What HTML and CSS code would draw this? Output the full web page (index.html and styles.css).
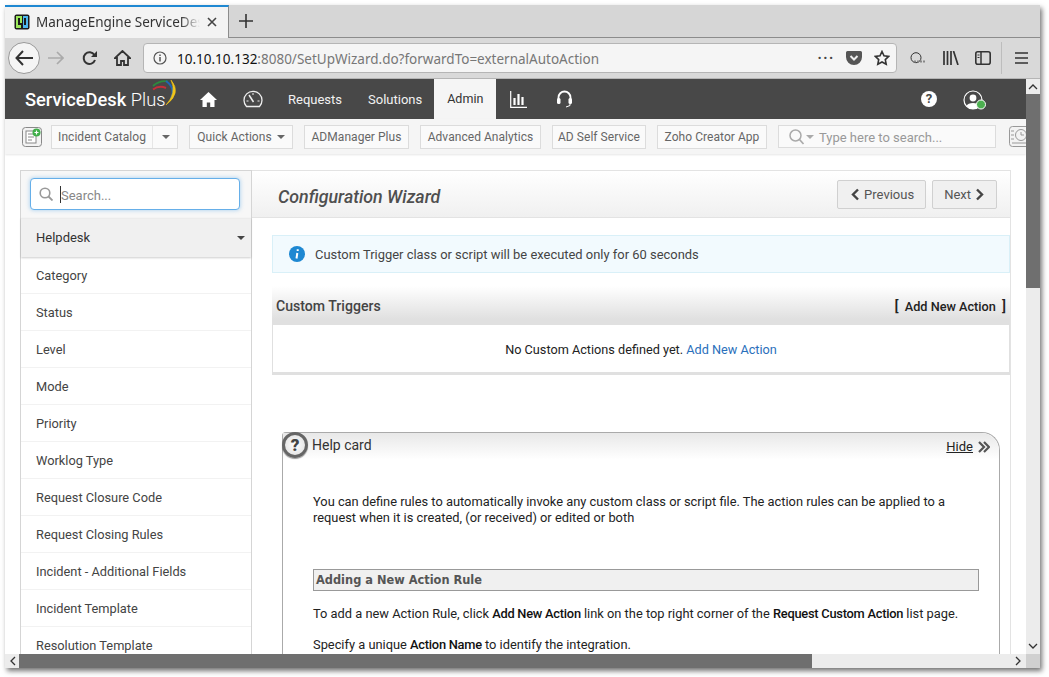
FILE: index.html
```html
<!DOCTYPE html>
<html lang="en">
<head>
    <meta charset="UTF-8">
    <title>ManageEngine ServiceDesk Plus</title>
    <link rel="stylesheet" href="styles.css">
</head>
<body>
<div class="window">
    <div class="tabbar">
        <div class="tab">
            <svg class="favicon" width="16" height="16" viewBox="0 0 16 16"><rect x=".5" y=".5" width="15" height="15" rx="2" fill="#1b1b1b"/><path d="M2 2h6v7H6V4H4v7h3v3H2z" fill="#9be85a"/><path d="M9 2h5v12H9v-3h3V4h-2v7H9z" fill="#4db8ef"/></svg>
            <span class="tab-title">ManageEngine ServiceDesk Plus</span>
            <svg width="12" height="12" viewBox="0 0 12 12"><path d="M2 2l8 8M10 2l-8 8" stroke="#444" stroke-width="1.6"/></svg>
        </div>
        <svg class="new-tab" width="14" height="14" viewBox="0 0 14 14"><path d="M7 0v14M0 7h14" stroke="#333" stroke-width="1.6"/></svg>
    </div>
    <div class="navbar">
        <div class="back">
            <svg width="18" height="16" viewBox="0 0 18 16"><path d="M8 1L1.500 8 8 15M2 8h16" fill="none" stroke="#333" stroke-width="2"/></svg>
        </div>
        <svg class="nav-icon forward" width="16" height="14" viewBox="0 0 16 14"><path d="M9 1l6 6-6 6M15 7H0" fill="none" stroke="#aaa" stroke-width="1.700"/></svg>
        <svg class="nav-icon reload" width="16" height="16" viewBox="0 0 16 16"><path d="M13 10a5.800 5.800 0 1 1-.6-5" fill="none" stroke="#333" stroke-width="2"/><path d="M15 1v6H9z" fill="#333"/></svg>
        <svg class="nav-icon home" width="17" height="16" viewBox="0 0 17 16"><path d="M8.500 1L1 8h2v7h4v-4h3v4h4V8h2z" fill="none" stroke="#333" stroke-width="1.800"/></svg>
        <div class="urlbar">
            <svg width="14" height="14" viewBox="0 0 14 14"><circle cx="7" cy="7" r="6" fill="none" stroke="#555" stroke-width="1.200"/><path d="M7 6v4.500M7 3.500v1.500" stroke="#555" stroke-width="1.500"/></svg>
            <span class="url"><span class="url-host">10.10.10.132</span>:8080/SetUpWizard.do?forwardTo=externalAutoAction</span>
            <span class="url-dots">•••</span>
            <svg width="16" height="14" viewBox="0 0 16 14"><path d="M1.500 0h13A1.500 1.500 0 0 1 16 1.500V6A8 8 0 0 1 0 6V1.500A1.500 1.500 0 0 1 1.500 0z" fill="#555"/><path d="M4.500 5L8 8.500 11.500 5" fill="none" stroke="#eee" stroke-width="2"/></svg>
            <svg width="16" height="16" viewBox="0 0 16 16"><path d="M8 1.500l2 4.300 4.700.6-3.400 3.200.9 4.700L8 12l-4.200 2.300.9-4.700L1.300 6.400 6 5.800z" fill="none" stroke="#333" stroke-width="1.600"/></svg>
        </div>
        <div class="nav-right">
            <svg width="17" height="12" viewBox="0 0 17 12"><circle cx="6" cy="5.700" r="5" fill="none" stroke="#333"/><path d="M4 9.500h12" stroke="#888" stroke-width="2" stroke-dasharray="2 1"/></svg>
            <svg width="16" height="14" viewBox="0 0 16 14"><path d="M1 0v14M4.500 0v14M8 0v14M10.500 0L15 14" stroke="#333" stroke-width="1.700"/></svg>
            <svg width="16" height="14" viewBox="0 0 16 14"><rect x=".8" y=".8" width="14.400" height="12.400" rx="2" fill="none" stroke="#333" stroke-width="1.600"/><path d="M6 1v12" stroke="#333" stroke-width="1.500"/><path d="M2.500 4h2M2.500 6.500h2" stroke="#333"/></svg>
            <span class="nav-sep"></span>
            <svg width="14" height="12" viewBox="0 0 14 12"><path d="M0 1h13M0 6h13M0 11h13" stroke="#333" stroke-width="1.600"/></svg>
        </div>
    </div>
    <div class="view">
        <div class="view-main">
            <div class="page">
                <header class="app-header">
                    <div class="logo">
                        <span class="logo-name">ServiceDesk</span> <span class="logo-plus">Plus</span>
                        <svg class="logo-arc" width="28" height="27" viewBox="0 0 28 27"><path d="M1 6Q8 0 16 1.500" fill="none" stroke="#2d8a3e" stroke-width="1.800"/><path d="M1 9.500Q7 5 14 8" fill="none" stroke="#c62f3a" stroke-width="2"/><path d="M14 1Q24 8 19 19" fill="none" stroke="#1f66b8" stroke-width="2"/><path d="M19 0Q30 13 14 25Q25 13 19 0" fill="#f0c419" stroke="#f0c419" stroke-width=".6"/></svg>
                    </div>
                    <svg class="hd-home" width="17" height="15" viewBox="0 0 17 15"><path d="M8.500 0L0 8h2.500v7h4.300v-4.500h3.400V15h4.300V8H17z" fill="#fff"/></svg>
                    <svg class="hd-gauge" width="20" height="18" viewBox="0 0 20 18"><path d="M3.500 16.500a9 9 0 1 1 13 0z" fill="none" stroke="#eee" stroke-width="1.300"/><path d="M6 5l4.500 7" stroke="#eee" stroke-width="1.500"/><path d="M3.500 11h2M14.500 11h2M10 3v2" stroke="#eee"/></svg>
                    <a class="hd-link hd-requests">Requests</a>
                    <a class="hd-link hd-solutions">Solutions</a>
                    <a class="hd-link hd-admin">Admin</a>
                    <svg class="hd-chart" width="17" height="17" viewBox="0 0 17 17"><path d="M.7 0v16.300H17" fill="none" stroke="#fff" stroke-width="1.200"/><path d="M4.500 7v7M8.500 3v11M12.500 6v8" stroke="#fff" stroke-width="2.200"/></svg>
                    <svg class="hd-headset" width="15" height="18" viewBox="0 0 15 18"><path d="M1.500 10V7.500a6 6 0 0 1 12 0V10" fill="none" stroke="#fff" stroke-width="1.800"/><rect x="0" y="8" width="3.500" height="6" rx="1.500" fill="#fff"/><rect x="11.500" y="8" width="3.500" height="6" rx="1.500" fill="#fff"/><path d="M13 14v1.500L9 17" fill="none" stroke="#fff"/></svg>
                    <span class="hd-spacer"></span>
                    <span class="hd-help">?</span>
                    <span class="hd-user">
                        <svg width="23" height="20" viewBox="0 0 23 20"><circle cx="10" cy="10" r="9" fill="none" stroke="#fff" stroke-width="1.200"/><circle cx="10" cy="8" r="3.400" fill="#fff"/><path d="M3.500 16c1-4 12-4 13 0l-3 3h-7z" fill="#fff"/><circle cx="18" cy="14.500" r="4.500" fill="#4caf50" stroke="#fff"/></svg>
                    </span>
                </header>
                <div class="toolbar">
                    <svg class="tool-icon" width="20" height="20" viewBox="0 0 20 20"><rect x=".5" y=".5" width="19" height="19" rx="3" fill="#f3f3f3" stroke="#888"/><rect x="4" y="4" width="10" height="12" fill="#fff" stroke="#888"/><path d="M6 7h6M6 10h6M6 13h4" stroke="#888"/><circle cx="14.500" cy="5.500" r="4" fill="#3fae49"/><path d="M12.500 5.500h4M14.500 3.500v4" stroke="#fff" stroke-width="1.200"/></svg>
                    <div class="tool-btn catalog"><span class="catalog-label">Incident Catalog</span><span class="catalog-caret"><i class="caret"></i></span></div>
                    <div class="tool-btn btn-quick">Quick Actions <i class="caret"></i></div>
                    <div class="tool-btn btn-manager">ADManager Plus</div>
                    <div class="tool-btn btn-analytics">Advanced Analytics</div>
                    <div class="tool-btn btn-self">AD Self Service</div>
                    <div class="tool-btn btn-zoho">Zoho Creator App</div>
                    <div class="tool-search">
                        <svg width="17" height="16" viewBox="0 0 17 16"><circle cx="6.500" cy="6.500" r="5.500" fill="none" stroke="#aaa" stroke-width="1.500"/><path d="M10.500 10.500l4 4.500" stroke="#aaa" stroke-width="1.700"/></svg>
                        <i class="caret caret-light"></i>
                        <span class="tool-search-text">Type here to search...</span>
                    </div>
                    <svg class="tool-clock" width="24" height="22" viewBox="0 0 24 22"><rect x=".5" y=".5" width="30" height="20" rx="3" fill="#f3f3f3" stroke="#999"/><circle cx="12" cy="9" r="5.500" fill="none" stroke="#999"/><path d="M12 6v3h3M2 5h3M2 9h3M2 13h3M3 17h20" fill="none" stroke="#999"/></svg>
                </div>
                <div class="content">
                    <aside class="sidebar">
                        <div class="side-search">
                            <div class="side-input">
                                <svg width="14" height="14" viewBox="0 0 14 14"><circle cx="6" cy="6" r="4.800" fill="none" stroke="#999" stroke-width="1.600"/><path d="M9.500 9.500L13.500 13.500" stroke="#999" stroke-width="1.800"/></svg>
                                <span class="cursor"></span><span class="side-placeholder">Search...</span>
                            </div>
                        </div>
                        <div class="side-group">Helpdesk <i class="caret caret-dark"></i></div>
                        <a class="side-item">Category</a>
                        <a class="side-item">Status</a>
                        <a class="side-item">Level</a>
                        <a class="side-item">Mode</a>
                        <a class="side-item">Priority</a>
                        <a class="side-item">Worklog Type</a>
                        <a class="side-item">Request Closure Code</a>
                        <a class="side-item">Request Closing Rules</a>
                        <a class="side-item">Incident - Additional Fields</a>
                        <a class="side-item">Incident Template</a>
                        <a class="side-item">Resolution Template</a>
                    </aside>
                    <main class="panel">
                        <div class="panel-head">
                            <h1>Configuration Wizard</h1>
                            <div class="wizard-btns">
                                <button class="wiz-btn"><svg width="10" height="13" viewBox="0 0 10 13"><path d="M8 1.500L3 6.500l5 5" fill="none" stroke="#444" stroke-width="2.400"/></svg>Previous</button>
                                <button class="wiz-btn">Next<svg width="10" height="13" viewBox="0 0 10 13"><path d="M2 1.500l5 5-5 5" fill="none" stroke="#444" stroke-width="2.400"/></svg></button>
                            </div>
                        </div>
                        <div class="panel-body">
                            <div class="info-box">
                                <svg width="16" height="16" viewBox="0 0 16 16"><circle cx="8" cy="8" r="8" fill="#1e88d2"/><path d="M8.700 3.200v1.800M8.300 7l-.8 5.500" stroke="#fff" stroke-width="2"/></svg>
                                <span>Custom Trigger class or script will be executed only for 60 seconds</span>
                            </div>
                            <div class="triggers">
                                <div class="triggers-head">
                                    <span class="triggers-title">Custom Triggers</span>
                                    <span class="triggers-add"><span class="bracket">[</span> Add New Action <span class="bracket">]</span></span>
                                </div>
                                <div class="triggers-body">No Custom Actions defined yet. <a class="link">Add New Action</a></div>
                            </div>
                            <section class="help-card">
                                <div class="help-head">
                                    <span class="help-badge">?</span>
                                    <span class="help-title">Help card</span>
                                    <span class="help-hide"><u>Hide</u><svg width="12" height="12" viewBox="0 0 12 12"><path d="M1 1l5 5-5 5M6 1l5 5-5 5" fill="none" stroke="#555" stroke-width="2.200"/></svg></span>
                                </div>
                                <div class="help-text">
                                    <p class="help-intro">You can define rules to automatically invoke any custom class or script file. The action rules can be applied to a request when it is created, (or received) or edited or both</p>
                                    <h2>Adding a New Action Rule</h2>
                                    <p>To add a new Action Rule, click <b>Add New Action</b> link on the top right corner of the <b>Request Custom Action</b> list page.</p>
                                    <p>Specify a unique <b>Action Name</b> to identify the integration.</p>
                                </div>
                            </section>
                        </div>
                    </main>
                </div>
            </div>
            <div class="hscroll">
                <svg width="6" height="10" viewBox="0 0 6 10"><path d="M5 1L1 5l4 4" fill="none" stroke="#333" stroke-width="1.300"/></svg>
                <div class="hscroll-track"><div class="hscroll-thumb"></div></div>
                <svg width="6" height="10" viewBox="0 0 6 10"><path d="M1 1l4 4-4 4" fill="none" stroke="#333" stroke-width="1.300"/></svg>
            </div>
        </div>
        <div class="vscroll">
            <svg width="10" height="6" viewBox="0 0 10 6"><path d="M1 5l4-4 4 4" fill="none" stroke="#333" stroke-width="1.300"/></svg>
            <div class="vscroll-track"><div class="vscroll-thumb"></div></div>
            <svg width="10" height="6" viewBox="0 0 10 6"><path d="M1 1l4 4 4-4" fill="none" stroke="#333" stroke-width="1.300"/></svg>
            <div class="scroll-corner"></div>
        </div>
    </div>
</div>
</body>
</html>
```

FILE: styles.css
```css
/* browser frame */
html, body {
    margin: 0;
    height: 100%;
    overflow: hidden;
    background-color: #fff;
}

body {
    padding: 5px 0 0 5px;
    box-sizing: border-box;
    font-family: Roboto, "Liberation Sans", sans-serif;
}

.window {
    width: 1035px;
    height: 663px;
    display: flex;
    flex-direction: column;
    overflow: hidden;
    box-shadow: 2px 3px 5px rgba(0, 0, 0, 0.55);
}

.tabbar {
    height: 32px;
    flex: none;
    display: flex;
    align-items: flex-start;
    background-color: #d6d6d6;
    border-bottom: 1px solid #8c8c8c;
}

.tab {
    width: 224px;
    height: 33px;
    box-sizing: border-box;
    display: flex;
    align-items: center;
    gap: 6px;
    padding: 0 10px 1px 9px;
    background-color: #f3f3f3;
    border-top: 2px solid #1e88d2;
    border-right: 1px solid #8c8c8c;
    position: relative;
}

.tab-title {
    width: 164px;
    white-space: nowrap;
    overflow: hidden;
    font-family: "Noto Sans", sans-serif;
    font-size: 13.500px;
    color: #333;
    -webkit-mask-image: linear-gradient(to right, #000 88%, transparent);
    mask-image: linear-gradient(to right, #000 88%, transparent);
}

.favicon { flex: none; }

.new-tab { margin: 9px 0 0 10px; }

.navbar {
    height: 40px;
    flex: none;
    display: flex;
    align-items: center;
    background-color: #d9d9d9;
    border-bottom: 1px solid #b5b5b5;
    padding-left: 3px;
}

.back {
    width: 32px;
    height: 32px;
    box-sizing: border-box;
    border: 1px solid #999;
    border-radius: 50%;
    background-color: #f5f5f5;
    display: flex;
    align-items: center;
    justify-content: center;
}

.nav-icon { flex: none; }
.forward { margin-left: 8px; }
.reload { margin-left: 18px; }
.home { margin-left: 16px; }

.urlbar {
    width: 754px;
    height: 30px;
    margin-left: 12px;
    box-sizing: border-box;
    display: flex;
    align-items: center;
    gap: 9px;
    padding: 0 6px 0 9px;
    background-color: #f5f5f5;
    border: 1px solid #b5b5b5;
    border-radius: 4px;
}

.url {
    flex: 1;
    font-family: "Noto Sans", sans-serif;
    font-size: 13.500px;
    color: #777;
    margin-left: 1px;
    padding-top: 1px;
}

.url-host { color: #111; }

.url-dots {
    font-size: 11px;
    letter-spacing: 2px;
    color: #444;
    margin-right: 2px;
}

.urlbar svg:nth-of-type(2) { margin-right: 3px; }

.nav-right {
    display: flex;
    align-items: center;
    gap: 16px;
    margin-left: 13px;
}

.nav-sep {
    width: 1px;
    height: 32px;
    margin: 0 -3px 0 -6px;
    background-color: #bdbdbd;
}

/* viewport + scrollbars */
.view {
    flex: 1;
    min-height: 0;
    display: flex;
}

.view-main {
    flex: 1;
    min-width: 0;
    display: flex;
    flex-direction: column;
}

.page {
    flex: 1;
    min-height: 0;
    overflow: hidden;
    background-color: #fff;
}

.hscroll {
    height: 14px;
    flex: none;
    display: flex;
    align-items: center;
    padding: 0 5px;
    gap: 4px;
    background-color: #ececec;
}

.hscroll-track { flex: 1; height: 14px; margin-left: -1px; margin-right: 1px; }
.hscroll-thumb { width: 793px; height: 14px; background-color: #6f6f6f; }

.vscroll {
    width: 14px;
    flex: none;
    display: flex;
    flex-direction: column;
    align-items: center;
    background-color: #ececec;
    padding-top: 5px;
    box-sizing: border-box;
}

.vscroll-track { flex: 1; width: 14px; margin-top: 4px; }
.vscroll-thumb { width: 14px; height: 194px; background-color: #6f6f6f; }

.vscroll > svg:nth-of-type(2) { margin-bottom: 5px; }

.scroll-corner {
    width: 14px;
    height: 14px;
    flex: none;
    background-color: #d0d0d0;
}

/* app header */
.app-header {
    height: 40px;
    display: flex;
    align-items: center;
    background-color: #484848;
    color: #fff;
}

.logo {
    width: 195px;
    padding: 1px 0 0 20px;
    box-sizing: border-box;
    position: relative;
    white-space: nowrap;
    font-size: 18.300px;
    color: #fff;
}

.logo-name { font-weight: 500; }
.logo-plus { font-weight: 300; }

.logo-arc {
    position: absolute;
    left: 147px;
    top: -8px;
}

.hd-gauge { margin-left: 26px; }
.hd-link {
    font-size: 13px;
    color: #f2f2f2;
}
.hd-requests { margin-left: 25px; }
.hd-solutions { margin-left: 26px; }

.hd-admin {
    height: 40px;
    line-height: 40px;
    padding: 0 13px;
    margin-left: 12px;
    background-color: #f5f5f5;
    font-size: 12.500px;
    color: #333;
}

.hd-chart { margin-left: 14px; }
.hd-headset { margin-left: 30px; }
.hd-spacer { flex: 1; }

.hd-help {
    width: 16px;
    height: 16px;
    border-radius: 50%;
    background-color: #fff;
    color: #484848;
    font-size: 13px;
    font-weight: 700;
    line-height: 16px;
    text-align: center;
}

.hd-user {
    margin: 2px 40px 0 26px;
    display: flex;
}

/* second row */
.toolbar {
    height: 35px;
    display: flex;
    align-items: center;
    gap: 11px;
    padding-left: 17px;
    background-color: #f5f5f5;
    box-shadow: 0 1px 2px rgba(0, 0, 0, 0.1);
    overflow: hidden;
    position: relative;
}

.tool-icon { flex: none; margin-right: -2px; }

.tool-btn {
    height: 24px;
    box-sizing: border-box;
    border: 1px solid #dcdcdc;
    background-color: #fafafa;
    font-size: 12px;
    letter-spacing: 0.05px;
    color: #666;
    line-height: 22px;
    text-align: center;
    white-space: nowrap;
    flex: none;
}

.btn-quick { width: 104px; }
.btn-manager { width: 105px; }
.btn-analytics { width: 121px; }
.btn-self { width: 94px; }
.btn-zoho { width: 110px; }

.catalog {
    display: flex;
    width: 127px;
    padding: 0;
}
.catalog-label { padding: 0 6px; width: 101px; border-right: 1px solid #e6e6e6; box-sizing: border-box; }
.catalog-caret { flex: 1; text-align: center; }

.caret {
    display: inline-block;
    width: 0;
    height: 0;
    margin-left: 2px;
    vertical-align: middle;
    border-left: 4px solid transparent;
    border-right: 4px solid transparent;
    border-top: 4px solid #666;
}
.caret-light { border-top-color: #aaa; margin-left: -5px; }
.caret-dark { border-top-color: #444; }

.tool-search {
    width: 218px;
    height: 23px;
    box-sizing: border-box;
    border: 1px solid #dcdcdc;
    background-color: #fafafa;
    display: flex;
    align-items: center;
    gap: 5px;
    padding-left: 10px;
    flex: none;
}

.tool-search-text {
    font-size: 13px;
    color: #999;
    padding-top: 1px;
}

.tool-clock { flex: none; margin-left: 2px; }

/* page content */
.content {
    display: flex;
    padding: 16px 0 0 15px;
}

.sidebar {
    width: 232px;
    flex: none;
    box-sizing: border-box;
    border: 1px solid #d5d5d5;
    border-bottom: none;
}

.side-search {
    height: 47px;
    padding: 7px 11px 0 9px;
    box-sizing: border-box;
    background-color: #f7f7f7;
}

.side-input {
    height: 32px;
    box-sizing: border-box;
    background-color: #fff;
    border: 1px solid #66afe9;
    border-radius: 4px;
    box-shadow: 0 0 4px rgba(102, 175, 233, 0.6);
    display: flex;
    align-items: center;
    padding-left: 8px;
}

.cursor {
    width: 1px;
    height: 17px;
    margin-left: 7px;
    background-color: #333;
}

.side-placeholder {
    font-size: 13px;
    color: #888;
    padding-top: 2px;
}

.side-group {
    height: 39px;
    box-sizing: border-box;
    display: flex;
    align-items: center;
    justify-content: space-between;
    padding: 0 6px 1px 15px;
    background-color: #f0f0f0;
    border-top: 1px solid #ececec;
    box-shadow: 0 1px 2px rgba(0, 0, 0, 0.2);
    font-size: 13px;
    color: #333;
    position: relative;
}

.side-item {
    display: block;
    height: 37px;
    box-sizing: border-box;
    padding: 11px 15px 0;
    border-bottom: 1px solid #f2f2f2;
    font-size: 12.800px;
    line-height: 15px;
    color: #444;
}

.panel {
    width: 759px;
    flex: none;
    box-sizing: border-box;
    border-top: 1px solid #e3e3e3;
    border-right: 1px solid #e3e3e3;
}

.panel-head {
    height: 47px;
    box-sizing: border-box;
    display: flex;
    align-items: center;
    justify-content: space-between;
    padding: 4px 13px 0 26px;
    background: linear-gradient(#fff, #f0f0f0);
    border-bottom: 1px solid #e3e3e3;
}

h1 {
    margin: 0;
    font-size: 17.800px;
    font-weight: 500;
    font-style: italic;
    color: #4f4f4f;
}

.wizard-btns {
    display: flex;
    gap: 6px;
    margin-top: -3px;
}

.wiz-btn {
    height: 29px;
    box-sizing: border-box;
    display: flex;
    align-items: center;
    gap: 4px;
    padding: 0 11px;
    background-color: #f0f0f0;
    border: 1px solid #d0d0d0;
    border-radius: 2px;
    font-family: inherit;
    font-size: 13px;
    color: #555;
}

.wiz-btn:first-child { padding-left: 12px; }

.panel-body {
    padding: 17px 0 0 20px;
}

.info-box {
    height: 38px;
    box-sizing: border-box;
    display: flex;
    align-items: center;
    gap: 10px;
    padding-left: 16px;
    background-color: #f2fafe;
    border: 1px solid #d9f0f8;
    font-size: 12.930px;
    color: #444;
}

.triggers {
    margin-top: 13px;
}

.triggers-head {
    height: 39px;
    box-sizing: border-box;
    display: flex;
    align-items: center;
    justify-content: space-between;
    padding: 1px 1px 0 4px;
    background: linear-gradient(#fff, #e0e0e0 85%);
}

.triggers-title {
    font-size: 14.100px;
    font-weight: 500;
    color: #444;
}

.triggers-add {
    font-size: 12.700px;
    font-weight: 500;
    color: #222;
}

.bracket {
    font-size: 15px;
    margin: 0 3px;
}

.triggers-body {
    height: 50px;
    box-sizing: border-box;
    border: 1px solid #e0e0e0;
    border-top: none;
    border-bottom-width: 3px;
    text-align: center;
    line-height: 49px;
    font-size: 12.700px;
    color: #222;
}

.link { color: #2a6fbb; }

.help-card {
    margin: 57px 10px 0;
    height: 300px;
    border: 1px solid #aaa;
    border-bottom: none;
    border-radius: 4px 18px 0 0;
    position: relative;
}

.help-head {
    height: 38px;
    box-sizing: border-box;
    display: flex;
    justify-content: space-between;
    padding: 4px 9px 0 29px;
    border-radius: 0 18px 0 0;
    background: linear-gradient(#e8e8e8, #fff 70%);
}

.help-badge {
    position: absolute;
    left: -1px;
    top: -1px;
    width: 26px;
    height: 26px;
    box-sizing: border-box;
    border: 3px solid #666;
    border-radius: 50%;
    background: radial-gradient(#fff, #ddd);
    box-shadow: 0 1px 1px rgba(0, 0, 0, 0.4);
    font-size: 17px;
    font-weight: 900;
    line-height: 20px;
    text-align: center;
    color: #444;
}

.help-title {
    font-size: 14px;
    color: #333;
}

.help-hide {
    display: flex;
    align-items: center;
    gap: 5px;
    height: 17px;
    margin-top: 1px;
    font-size: 13px;
    color: #222;
}

.help-text {
    padding: 23px 20px 0 30px;
    font-size: 12.850px;
    line-height: 16px;
    color: #222;
}

.help-text p { margin: 0 0 15px; }
.help-text b { font-weight: 500; color: #111; letter-spacing: -0.25px; }
.help-text .help-intro { margin-bottom: 43px; }

h2 {
    margin: 0 0 15px;
    height: 22px;
    box-sizing: border-box;
    padding-left: 2px;
    background-color: #f0f0f0;
    border: 1px solid #999;
    font-family: "DejaVu Sans", sans-serif;
    font-size: 11.400px;
    font-weight: 700;
    line-height: 20px;
    color: #555;
}
```
